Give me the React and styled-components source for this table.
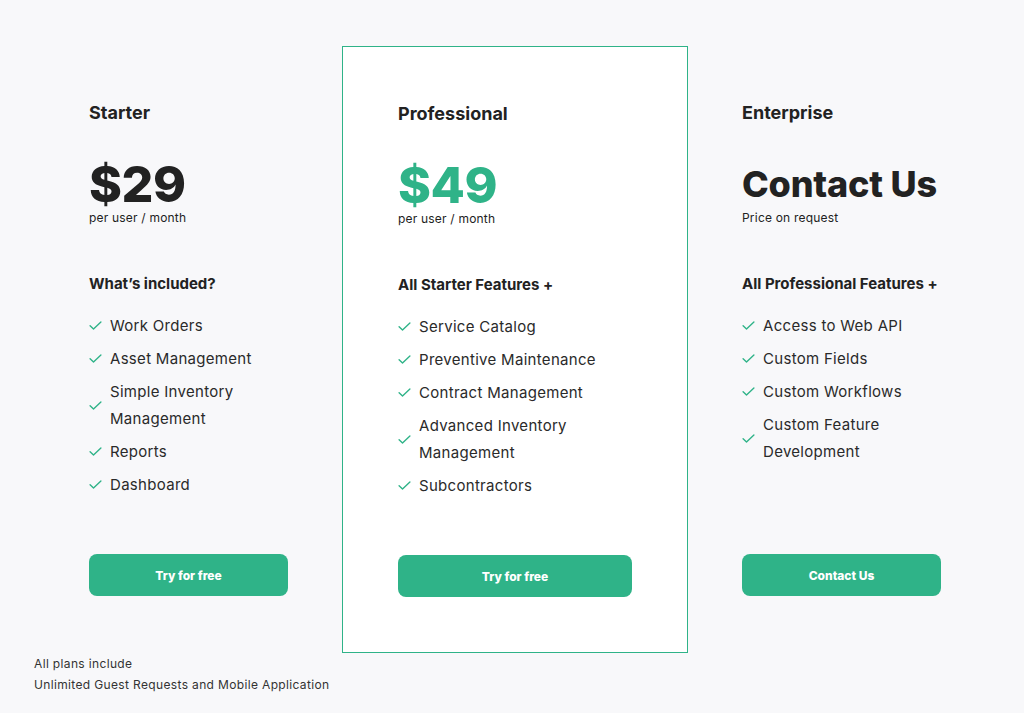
import styled, { createGlobalStyle } from "styled-components";

const plans = [
  {
    name: "Starter",
    price: "$29",
    note: "per user / month",
    heading: "What’s included?",
    features: ["Work Orders", "Asset Management", "Simple Inventory Management", "Reports", "Dashboard"],
    cta: "Try for free",
  },
  {
    name: "Professional",
    price: "$49",
    note: "per user / month",
    heading: "All Starter Features +",
    features: [
      "Service Catalog",
      "Preventive Maintenance",
      "Contract Management",
      "Advanced Inventory Management",
      "Subcontractors",
    ],
    cta: "Try for free",
    featured: true,
  },
  {
    name: "Enterprise",
    price: "Contact Us",
    note: "Price on request",
    heading: "All Professional Features +",
    features: ["Access to Web API", "Custom Fields", "Custom Workflows", "Custom Feature Development"],
    cta: "Contact Us",
    textPrice: true,
  },
];

function Check() {
  return (
    <CheckIcon viewBox="0 0 14 10" fill="none">
      <path d="M1 5.2L4.8 9L13 1" stroke="#2fb388" strokeWidth="1.5" strokeLinecap="round" strokeLinejoin="round" />
    </CheckIcon>
  );
}

export default function App() {
  return (
    <>
      <GlobalStyle />
      <Page>
        <Row>
          {plans.map((plan) => (
            <Plan key={plan.name} $featured={plan.featured}>
              <PlanName>{plan.name}</PlanName>
              <Price $featured={plan.featured} $text={plan.textPrice}>
                {plan.price}
              </Price>
              <PriceNote>{plan.note}</PriceNote>
              <FeatureHeading>{plan.heading}</FeatureHeading>
              <FeatureList>
                {plan.features.map((f) => (
                  <Feature key={f}>
                    <Check />
                    <FeatureText>{f}</FeatureText>
                  </Feature>
                ))}
              </FeatureList>
              <CtaButton>{plan.cta}</CtaButton>
            </Plan>
          ))}
        </Row>
        <Footer>
          <div>All plans include</div>
          <div>Unlimited Guest Requests and Mobile Application</div>
        </Footer>
      </Page>
    </>
  );
}

// ─── Styled Components ───────────────────────────────────────

const GlobalStyle = createGlobalStyle`
  html, body {
    margin: 0;
    padding: 0;
    background: #f8f8fa;
  }
  body {
    font-family: Inter, "Open Sans", "Liberation Sans", sans-serif;
    color: #222222;
  }
`;

const Page = styled.div`
  min-height: 713px;
  box-sizing: border-box;
`;

const Row = styled.div`
  display: flex;
  align-items: flex-start;
  gap: 54px;
  padding: 46px 0 0 89px;
`;

const Plan = styled.div`
  display: flex;
  flex-direction: column;
  box-sizing: border-box;
  width: ${(p) => (p.$featured ? "346px" : "199px")};
  padding-top: 55px;
  ${(p) =>
    p.$featured &&
    `
    background: #ffffff;
    border: 1px solid #2fb388;
    padding: 55px 55px 0;
    height: 607px;
  `}
`;

const PlanName = styled.div`
  font-size: 18px;
  line-height: 24px;
  font-weight: 700;
  color: #222222;
`;

const Price = styled.div`
  margin-top: 35px;
  height: 48px;
  font-size: ${(p) => (p.$text ? "36px" : "50px")};
  line-height: ${(p) => (p.$text ? "40px" : "48px")};
  padding-top: ${(p) => (p.$text ? "4px" : "0")};
  box-sizing: border-box;
  font-weight: 800;
  letter-spacing: ${(p) => (p.$text ? "-0.2px" : "-0.5px")};
  white-space: nowrap;
  color: ${(p) => (p.$featured ? "#2fb388" : "#222222")};
`;

const PriceNote = styled.div`
  margin-top: 2px;
  font-size: 12px;
  line-height: 16px;
  color: #222222;
  letter-spacing: 0.2px;
`;

const FeatureHeading = styled.div`
  margin-top: 48px;
  font-size: 15px;
  line-height: 20px;
  font-weight: 700;
  white-space: nowrap;
`;

const FeatureList = styled.ul`
  list-style: none;
  margin: 18px 0 0;
  padding: 0;
  min-height: 186px;
  display: flex;
  flex-direction: column;
  gap: 6px;
`;

const Feature = styled.li`
  display: flex;
  align-items: center;
  gap: 8px;
`;

const CheckIcon = styled.svg`
  width: 13px;
  height: 9px;
  flex-shrink: 0;
`;

const FeatureText = styled.span`
  font-size: 15px;
  line-height: 27px;
  color: #2a2a2a;
  letter-spacing: 0.3px;
`;

const CtaButton = styled.button`
  margin-top: 56px;
  height: 42px;
  width: 100%;
  border: none;
  border-radius: 8px;
  background: #2fb388;
  color: #ffffff;
  font-family: Inter, "Open Sans", sans-serif;
  font-size: 12px;
  font-weight: 800;
  cursor: pointer;
`;

const Footer = styled.div`
  padding-left: 34px;
  font-size: 12px;
  line-height: 21px;
  letter-spacing: 0.35px;
  color: #333333;
`;
